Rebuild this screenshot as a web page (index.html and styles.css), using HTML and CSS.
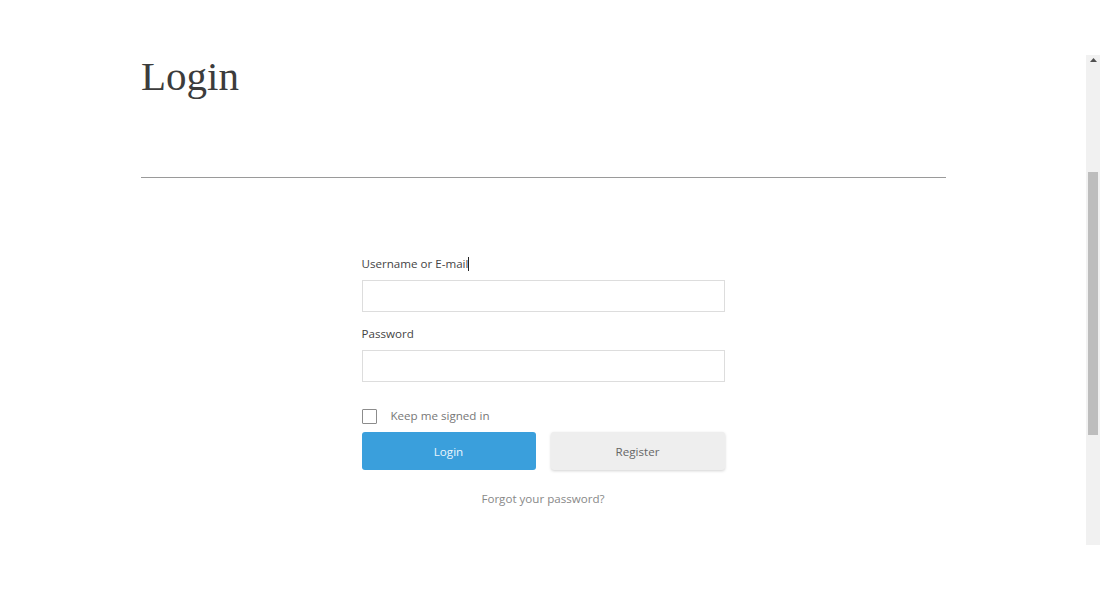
FILE: index.html
```html
<!DOCTYPE html>
<html lang="en">
<head>
<meta charset="utf-8">
<title>Login</title>
<link rel="stylesheet" href="styles.css">
</head>
<body>
<div class="frame">
  <main class="page">
    <h1 class="title">Login</h1>
    <hr class="rule">
    <form class="login-form">
      <div class="field">
        <label class="field-label" for="user">Username or E-mail<span class="caret"></span></label>
        <input class="field-input" id="user" type="text">
      </div>
      <div class="field">
        <label class="field-label" for="pass">Password</label>
        <input class="field-input" id="pass" type="password">
      </div>
      <label class="remember">
        <input class="check" type="checkbox">
        <span>Keep me signed in</span>
      </label>
      <div class="actions">
        <button class="btn btn-primary" type="button">Login</button>
        <button class="btn btn-secondary" type="button">Register</button>
      </div>
      <a class="forgot" href="#">Forgot your password?</a>
    </form>
  </main>
  <div class="scrollbar" aria-hidden="true">
    <div class="scroll-up">
      <svg width="7" height="4" viewBox="0 0 7 4"><path d="M0 4L3.5 0L7 4z" fill="#505050"/></svg>
    </div>
    <div class="scroll-track">
      <div class="scroll-thumb"></div>
    </div>
  </div>
</div>
</body>
</html>
```
FILE: styles.css
```css
html, body {
  margin: 0;
  padding: 0;
  background: #fff;
}
body {
  font-family: "Open Sans", "Noto Sans", sans-serif;
}
.frame {
  display: flex;
  align-items: flex-start;
  height: 600px;
}
.page {
  flex: 1;
  display: flex;
  flex-direction: column;
  align-items: center;
  padding-top: 52px;
}
.title,
.rule {
  align-self: stretch;
  margin-left: 141px;
  margin-right: 140px;
}
.title {
  margin-top: 0;
  margin-bottom: 0;
  font-family: "Liberation Serif", "DejaVu Serif", serif;
  font-weight: normal;
  font-size: 41px;
  line-height: 49px;
  color: #3c3c3c;
}
.rule {
  margin-top: 76px;
  margin-bottom: 0;
  border: 0;
  border-top: 1px solid #9a9a9a;
  height: 0;
}
.login-form {
  width: 363px;
  margin-top: 78px;
  display: flex;
  flex-direction: column;
}
.field {
  display: flex;
  flex-direction: column;
  gap: 8px;
}
.field + .field {
  margin-top: 14px;
}
.field-label {
  font-size: 11.6px;
  line-height: 16px;
  color: #444;
}
.caret {
  display: inline-block;
  width: 0;
  height: 14px;
  border-left: 1px solid #222;
  vertical-align: -3px;
}
.field-input {
  box-sizing: border-box;
  height: 32px;
  width: 100%;
  margin: 0;
  border: 1px solid #ddd;
  background: #fff;
  padding: 0 8px;
  font: inherit;
  outline: none;
}
.remember {
  margin-top: 26px;
  display: flex;
  align-items: center;
  gap: 14px;
  font-size: 11.6px;
  line-height: 16px;
  color: #777;
}
.check {
  appearance: none;
  -webkit-appearance: none;
  box-sizing: border-box;
  width: 15px;
  height: 15px;
  margin: 0;
  border: 1px solid #8c8c8c;
  border-radius: 1px;
  background: #fff;
}
.actions {
  margin-top: 8px;
  display: flex;
  gap: 15px;
}
.btn {
  flex: 1;
  height: 38px;
  border: 0;
  border-radius: 3px;
  font: inherit;
  font-size: 11.6px;
  cursor: pointer;
}
.btn-primary {
  background: #3a9fdc;
  color: #eaf5fc;
}
.btn-secondary {
  background: #eeeeee;
  color: #666;
  box-shadow: 0 1px 3px rgba(0, 0, 0, 0.18);
}
.forgot {
  margin-top: 21px;
  align-self: center;
  font-size: 11.6px;
  line-height: 16px;
  color: #888;
  text-decoration: none;
}
.scrollbar {
  width: 14px;
  margin-top: 55px;
  height: 490px;
  background: #f1f1f1;
  display: flex;
  flex-direction: column;
}
.scroll-up {
  height: 10px;
  display: flex;
  justify-content: center;
  align-items: flex-start;
  padding-top: 3px;
  box-sizing: border-box;
}
.scroll-up svg {
  display: block;
}
.scroll-track {
  flex: 1;
  padding: 107px 2px 0;
}
.scroll-thumb {
  height: 263px;
  background: #bdbdbd;
}
```
